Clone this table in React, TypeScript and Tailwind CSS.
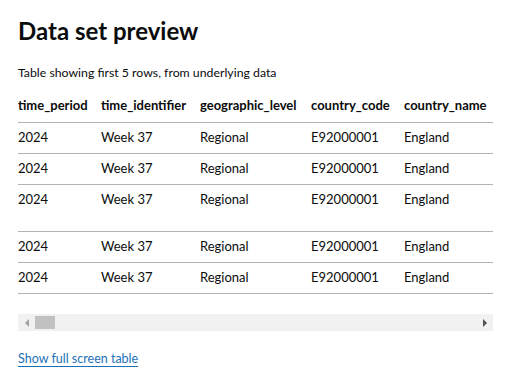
const columns = ['time_period', 'time_identifier', 'geographic_level', 'country_code', 'country_name']
const widths = ['w-[83px]', 'w-[99px]', 'w-[111px]', 'w-[93px]', 'w-[89px]']

const row = ['2024', 'Week 37', 'Regional', 'E92000001', 'England']

export default function App() {
  return (
    <div className="min-h-screen bg-white px-[18px] pt-[16px] text-[#0b0c0c] font-['Lato',sans-serif]">
      <h1 className="text-[24px] font-bold leading-[30px]">Data set preview</h1>
      <p className="mt-[19px] text-[12.3px] leading-[16px]">Table showing first 5 rows, from underlying data</p>
      <div className="mt-[5px] w-[475px] overflow-hidden">
        <table className="w-[475px] table-fixed border-collapse text-left text-[13px] leading-[16px]">
          <thead>
            <tr className="border-b border-[#b1b4b6]">
              {columns.map((c, i) => (
                <th key={c} className={`${widths[i]} pb-[9px] pt-[11px] font-bold`}>
                  {c}
                </th>
              ))}
            </tr>
          </thead>
          <tbody>
            {[0, 1, 2, 3, 4].map((r) => (
              <tr key={r} className="border-b border-[#b1b4b6]">
                {row.map((v, i) => (
                  <td key={i} className={r === 2 ? 'pt-[6px] pb-[24px] align-top' : 'pt-[6px] pb-[8px] align-top'}>
                    {v}
                  </td>
                ))}
              </tr>
            ))}
          </tbody>
        </table>
      </div>
      <div className="mt-[20px] flex h-[17px] w-[475px] items-center bg-[#f1f1f1]">
        <div className="flex w-[17px] items-center justify-center">
          <div className="h-0 w-0 border-y-[4px] border-r-[4px] border-y-transparent border-r-[#a3a3a3]" />
        </div>
        <div className="h-[13px] w-[20px] bg-[#c1c1c1]" />
        <div className="flex-1" />
        <div className="flex w-[17px] items-center justify-center">
          <div className="h-0 w-0 border-y-[4px] border-l-[4px] border-y-transparent border-l-[#505050]" />
        </div>
      </div>
      <a href="#" className="mt-[20px] inline-block text-[12.5px] leading-[16px] text-[#1d70b8] underline decoration-1 underline-offset-[3px]">
        Show full screen table
      </a>
    </div>
  )
}
